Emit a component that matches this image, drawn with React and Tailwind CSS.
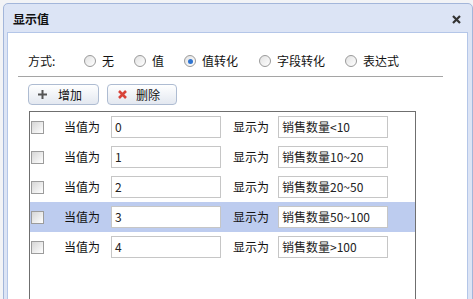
import React from 'react';

const font = { fontFamily: '"Noto Sans CJK SC", "Liberation Sans", sans-serif' };

const modes = [
  { label: '无', width: 'w-[50px]' },
  { label: '值', width: 'w-[50px]' },
  { label: '值转化', width: 'w-[75px]', checked: true },
  { label: '字段转化', width: 'w-[86px]' },
  { label: '表达式', width: 'w-[70px]' },
];

const rows = [
  { value: '0', text: '销售数量<10' },
  { value: '1', text: '销售数量10~20' },
  { value: '2', text: '销售数量20~50' },
  { value: '3', text: '销售数量50~100', selected: true },
  { value: '4', text: '销售数量>100' },
];

const Radio = ({ checked }) => (
  <span className="flex h-[12px] w-[12px] items-center justify-center rounded-full border border-[#9a9a9a] bg-linear-to-br from-[#e2e2e2] to-white">
    {checked && <span className="h-[5px] w-[5px] rounded-full bg-[#2f74d0]" />}
  </span>
);

const Checkbox = () => (
  <span className="block h-[13px] w-[13px] border border-[#9c9c9c] bg-linear-to-br from-[#d6d6d6] to-white" />
);

const Field = ({ value }) => (
  <div className="flex h-[22px] w-[110px] items-center border border-[#c6c6c6] bg-white px-[3px] text-[12px] text-[#222]">
    {value}
  </div>
);

const Row = ({ row }) => (
  <div className={`flex h-[30px] items-center ${row.selected ? 'bg-[#bdccef]' : ''}`}>
    <div className="ml-[1px]">
      <Checkbox />
    </div>
    <span className="ml-[20px] w-[47px] text-[12px] text-[#111]">当值为</span>
    <Field value={row.value} />
    <span className="ml-[12px] w-[45px] text-[12px] text-[#111]">显示为</span>
    <Field value={row.text} />
  </div>
);

export default function App() {
  return (
    <div className="h-[299px] w-[473px] overflow-hidden bg-[#f2f3f6] pl-[3px] pt-[3px]" style={font}>
      <div className="h-[320px] w-[470px] rounded-t-[5px] border border-[#a3b6da] bg-[#dce4f5] pl-[3px] pr-[4px]">
        <div className="flex h-[28px] items-center justify-between pl-[6px] pr-[7px] pt-[2px]">
          <span className="text-[12px] font-bold text-[#111]">显示值</span>
          <svg width="9" height="9" viewBox="0 0 9 9">
            <path d="M1 1L8 8M8 1L1 8" stroke="#333" strokeWidth="2.2" />
          </svg>
        </div>
        <div className="h-[300px] border border-[#b4c6e8] bg-white">
          <div className="mt-[18px] flex h-[20px] items-center pl-[20px] text-[12px] text-[#111]">
            <span className="w-[56px]">方式:</span>
            {modes.map((m) => (
              <div key={m.label} className={`flex items-center gap-[6px] ${m.width}`}>
                <Radio checked={m.checked} />
                <span>{m.label}</span>
              </div>
            ))}
          </div>
          <div className="ml-[10px] mt-[5px] h-px w-[425px] bg-[#a5a5a5]" />
          <div className="ml-[20px] mt-[7px] flex gap-[8px] text-[12px] text-[#111]">
            <button className="flex h-[21px] w-[71px] items-center rounded-[4px] border border-[#aebcd2] bg-linear-to-b from-white to-[#e3e8f0] pl-[9px]">
              <svg width="9" height="9" viewBox="0 0 9 9">
                <path d="M4.5 0V9M0 4.5H9" stroke="#555" strokeWidth="2" />
              </svg>
              <span className="ml-[11px]">增加</span>
            </button>
            <button className="flex h-[21px] w-[70px] items-center rounded-[4px] border border-[#aebcd2] bg-linear-to-b from-white to-[#e3e8f0] pl-[10px]">
              <svg width="9" height="9" viewBox="0 0 9 9">
                <path d="M1 1L8 8M8 1L1 8" stroke="#d8443a" strokeWidth="2.6" />
              </svg>
              <span className="ml-[9px]">删除</span>
            </button>
          </div>
          <div className="ml-[21px] mt-[6px] h-[200px] w-[387px] border-l border-r border-t border-[#6f6f6f]">
            {rows.map((row) => (
              <Row key={row.value} row={row} />
            ))}
          </div>
        </div>
      </div>
    </div>
  );
}
